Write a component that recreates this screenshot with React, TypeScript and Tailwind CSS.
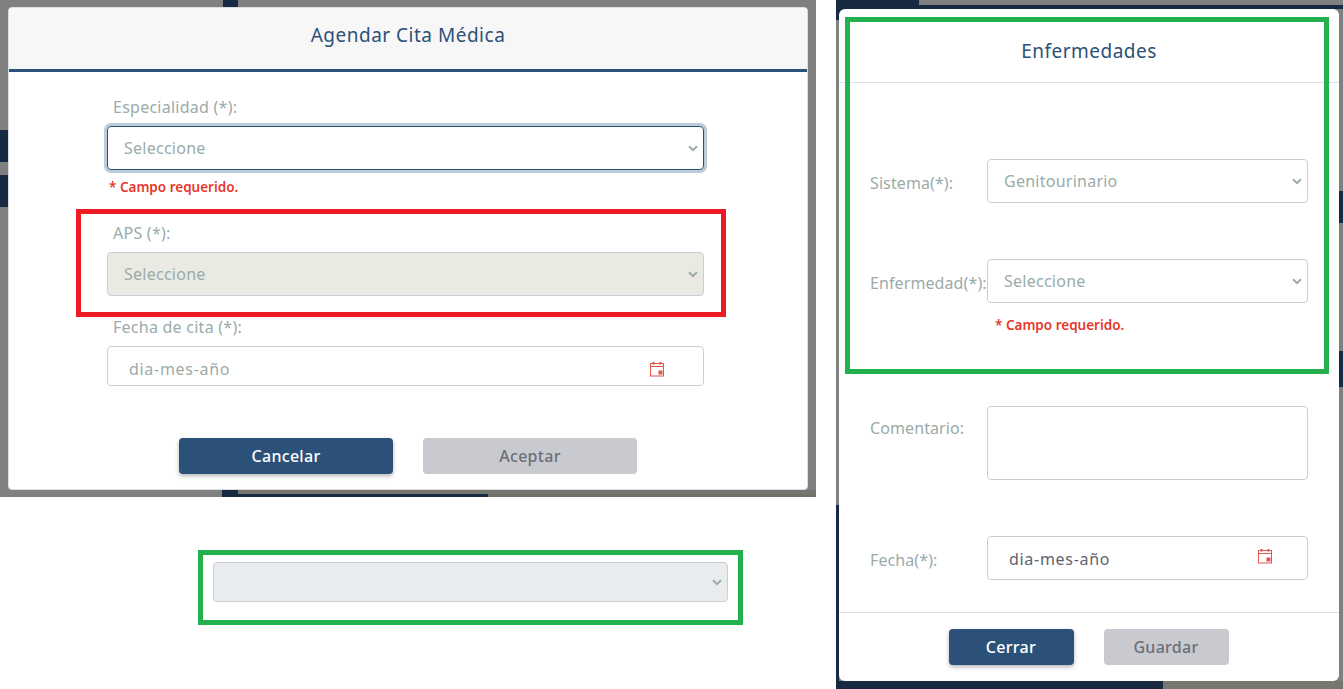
import type { ReactNode } from 'react';

function Chevron() {
  return (
    <svg width="10" height="7" viewBox="0 0 10 7" className="shrink-0" fill="none">
      <path d="M1 1.2 5 5.2 9 1.2" stroke="#9aabaa" strokeWidth="2" />
    </svg>
  );
}

function CalendarIcon({ className }: { className?: string }) {
  return (
    <svg width="16" height="16" viewBox="0 0 16 16" fill="none" className={`shrink-0 ${className ?? ''}`}>
      <rect x="1.5" y="2.5" width="13" height="12.5" stroke="#e2574c" />
      <path d="M1.5 5.5h13" stroke="#e2574c" />
      <path d="M4.5 1v2.5M11.5 1v2.5" stroke="#e2574c" strokeWidth="2" />
      <rect x="9.5" y="9.5" width="4" height="4" fill="#e2574c" />
    </svg>
  );
}

function Select({ value, className, height = 'h-[44px]' }: { value?: string; className?: string; height?: string }) {
  return (
    <div
      className={`flex ${height} items-center justify-between rounded-[4px] border pl-4 pr-[5px] text-[16px] tracking-[0.25px] text-[#9aabaa] ${className ?? 'border-[#ccced6] bg-white'}`}
    >
      <span>{value}</span>
      <Chevron />
    </div>
  );
}

function DateInput({ className, textClass, iconClass }: { className: string; textClass: string; iconClass?: string }) {
  return (
    <div className={`flex items-center justify-between rounded-[4px] border border-[#ccced6] bg-white pl-[21px] ${className}`}>
      <span className={`text-[16px] tracking-[0.7px] ${textClass}`}>dia-mes-año</span>
      <CalendarIcon className={iconClass} />
    </div>
  );
}

function ErrorText({ className }: { className: string }) {
  return <p className={`text-[13.5px] leading-[16px] font-semibold text-[#e5392c] ${className}`}>* Campo requerido.</p>;
}

function Button({ label, primary, className }: { label: string; primary?: boolean; className: string }) {
  return (
    <button
      className={`h-[36px] rounded-[4px] text-[16px] font-medium tracking-[0.3px] ${className} ${
        primary ? 'bg-[#2c5178] text-white shadow-[0_2px_4px_rgba(0,0,0,0.3)]' : 'bg-[#c9cad0] text-[#6c6f78]'
      }`}
    >
      {label}
    </button>
  );
}

function FieldLabel({ text }: { text: string }) {
  return <label className="block pl-[6px] text-[16px] leading-[20px] tracking-[0.25px] text-[#9aabaa]">{text}</label>;
}

function CitaModal() {
  return (
    <div className="relative flex h-[483px] w-[800px] flex-col overflow-hidden rounded-[4px] border border-[#dcdde0] bg-white">
      <div className="flex h-[64px] shrink-0 items-center justify-center border-b-[3px] border-[#2c5178] bg-[#f7f7f7] pb-[7px] text-[19px] tracking-[0.5px] text-[#2c5178]">
        Agendar Cita Médica
      </div>
      <div className="flex flex-1 flex-col pt-[25px] pl-[98px]">
        <div className="w-[597px]">
          <FieldLabel text="Especialidad (*):" />
          <div className="mt-[9px] rounded-[4px] shadow-[0_0_0_3px_#bccada]">
            <Select value="Seleccione" className="border-[#2c5178] bg-white" />
          </div>
          <ErrorText className="mt-[9px] ml-[2px]" />
          <div className="mt-[28px]">
            <FieldLabel text="APS (*):" />
          </div>
          <div className="mt-[9px]">
            <Select value="Seleccione" className="border-[#ccced6] bg-[#eaeae3]" />
          </div>
          <div className="mt-[21px]">
            <FieldLabel text="Fecha de cita (*):" />
          </div>
          <DateInput className="mt-[9px] h-[40px] pt-[5px] pr-[38px]" textClass="text-[#9aabaa]" />
        </div>
        <div className="mt-[52px] ml-[72px] flex gap-[30px]">
          <Button label="Cancelar" primary className="w-[214px]" />
          <Button label="Aceptar" className="w-[214px]" />
        </div>
      </div>
    </div>
  );
}

function Row({ label, children, className }: { label: string; children: ReactNode; className?: string }) {
  return (
    <div className={`flex items-center ${className ?? ''}`}>
      <span className="w-[117px] shrink-0 whitespace-nowrap pt-[3px] text-[16px] tracking-[0.1px] text-[#9aabaa]">{label}</span>
      <div className="w-[321px]">{children}</div>
    </div>
  );
}

function EnfermedadesModal() {
  return (
    <div className="relative flex h-[672px] w-[500px] flex-col overflow-hidden rounded-[6px] bg-white">
      <div className="flex h-[74px] shrink-0 items-center justify-center border-b border-[#dee0e4] pt-[12px] text-[19px] tracking-[0.5px] text-[#2c5178]">
        Enfermedades
      </div>
      <div className="flex-1 pt-[76px] pl-[31px]">
        <Row label="Sistema(*):">
          <Select value="Genitourinario" />
        </Row>
        <Row label="Enfermedad(*):" className="mt-[56px]">
          <Select value="Seleccione" />
        </Row>
        <ErrorText className="mt-[14px] ml-[125px]" />
        <div className="mt-[73px] flex items-start">
          <span className="w-[117px] shrink-0 pt-[10px] text-[16px] tracking-[0.1px] text-[#9aabaa]">Comentario:</span>
          <div className="h-[74px] w-[321px] rounded-[4px] border border-[#ccced6]" />
        </div>
        <Row label="Fecha(*):" className="mt-[56px]">
          <DateInput className="h-[44px] pr-[34px]" textClass="pt-[1px] text-[#5d6470]" iconClass="mb-[4px]" />
        </Row>
      </div>
      <div className="flex h-[69px] shrink-0 justify-center gap-[30px] border-t border-[#dee0e4] pt-[16px] pr-[1px]">
        <Button label="Cerrar" primary className="w-[125px]" />
        <Button label="Guardar" className="w-[125px]" />
      </div>
    </div>
  );
}

export default function App() {
  return (
    <div className="relative flex h-[689px] w-[1343px] overflow-hidden bg-white font-['Noto_Sans','Open_Sans',sans-serif]">
      <div className="w-[816px] shrink-0">
        {/* left capture: dimmed page behind the modal */}
        <div className="relative overflow-hidden bg-[#808080] px-[8px] pt-[7px] pb-[7px]">
          <div className="absolute top-0 left-[223px] h-[8px] w-[15px] bg-[#172a42]" />
          <div className="absolute top-[130px] left-0 h-[32px] w-[8px] bg-[#172a42]" />
          <div className="absolute top-[175px] left-0 h-[32px] w-[8px] bg-[#172a42]" />
          <div className="absolute bottom-0 left-[222px] h-[7px] w-[266px] bg-[#172a42]" />
          <div className="absolute bottom-[3px] left-[238px] h-[4px] w-[578px] bg-[#767670]" />
          <div className="absolute bottom-0 left-[488px] h-[3px] w-[328px] bg-[#71716a]" />
          <CitaModal />
        </div>

        {/* cropped select with its green annotation box */}
        <div className="mt-[53px] ml-[198px] h-[75px] w-[545px] border-[5px] border-[#22b14c] px-[10px] pt-[7px]">
          <Select className="border-[#ccced6] bg-[#e9ecef]" height="h-[40px]" />
        </div>
      </div>

      {/* right capture */}
      <div className="relative ml-[20px] h-[689px] w-[507px] overflow-hidden bg-[#808080] pt-[9px] pl-[3px]">
        <div className="absolute top-0 left-0 h-[20px] w-[83px] bg-[#172a42]" />
        <div className="absolute top-[5px] left-[83px] h-[4px] w-[424px] bg-[#172a42]" />
        <div className="absolute top-[505px] left-0 h-[184px] w-[3px] bg-[#172a42]" />
        <div className="absolute bottom-0 left-0 h-[8px] w-[327px] bg-[#172a42]" />
        <div className="absolute bottom-0 left-[327px] h-[8px] w-[180px] bg-[#77776f]" />
        <div className="absolute top-[191px] right-0 h-[32px] w-[4px] bg-[#172a42]" />
        <div className="absolute top-[351px] right-0 h-[36px] w-[4px] bg-[#172a42]" />
        <EnfermedadesModal />
      </div>

      {/* annotation boxes drawn over the captures */}
      <div className="absolute top-[209px] left-[76px] h-[108px] w-[650px] border-[5px] border-[#ed1c24]" />
      <div className="absolute top-[17px] left-[845px] h-[357px] w-[484px] border-[5px] border-[#22b14c]" />
    </div>
  );
}
